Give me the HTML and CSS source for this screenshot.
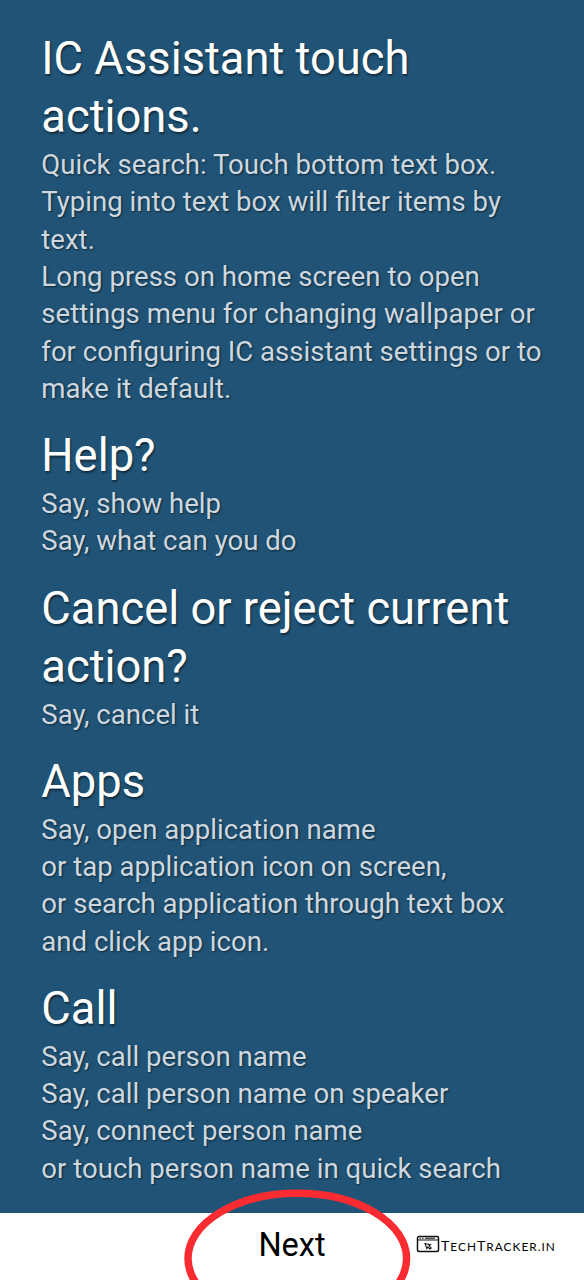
FILE: index.html
```html
<!DOCTYPE html>
<html lang="en">
<head>
<meta charset="utf-8">
<title>IC Assistant help</title>
<link rel="stylesheet" href="styles.css">
</head>
<body>
<main class="help">
  <section class="topic"><h2>IC Assistant touch<br>actions.</h2>
  <p>Quick search: Touch bottom text box.<br>Typing into text box will filter items by<br>text.<br>Long press on home screen to open<br>settings menu for changing wallpaper or<br>for configuring IC assistant settings or to<br>make it default.</p></section>
  <section class="topic"><h2>Help?</h2><p>Say, show help<br>Say, what can you do</p></section>
  <section class="topic"><h2>Cancel or reject current<br>action?</h2><p>Say, cancel it</p></section>
  <section class="topic"><h2>Apps</h2><p>Say, open application name<br>or tap application icon on screen,<br>or search application through text box<br>and click app icon.</p></section>
  <section class="topic"><h2>Call</h2><p>Say, call person name<br>Say, call person name on speaker<br>Say, connect person name<br>or touch person name in quick search</p></section>
</main>
<footer class="bar">
  <button class="next">Next</button>
  <svg class="ring" width="240" height="100" viewBox="0 0 240 100"><ellipse cx="119.300" cy="78.500" rx="109.300" ry="65.200" /></svg>
  <div class="brand">
    <svg width="25" height="18" viewBox="0 0 25 18"><rect x="1.500" y="1.500" width="21" height="15" rx="1.500"/><path class="thin" d="M2 5H22M3.500 3.300H5M6 3.300H7.500M9 3.300H19"/><path class="thin" d="M9 8.500l5.500 1.200-1.600 1.200 2.300 2-1.200 1.100-2.200-2-1 1.600z"/></svg>
    <span class="brand-name">T<small>ECH</small>T<small>RACKER.IN</small></span>
  </div>
</footer>
</body>
</html>
```
FILE: styles.css
```css
* { box-sizing: border-box; }
body { margin: 0; width: 584px; height: 1280px; overflow: hidden; display: flex; flex-direction: column; background: #205375; font-family: Roboto, sans-serif; }
.help { height: 1213px; padding: 30px 0 0 41.300px; white-space: nowrap; }
.topic { margin-bottom: 19.850px; }
h2 { margin: 0 0 -0.400px; font-weight: 400; font-size: 45.300px; line-height: 58.200px; color: #fff; text-shadow: 1px 2px 2px #0007; }
p { margin: 0; font-size: 27.580px; line-height: 37.350px; color: #ced8e0; text-shadow: 1px 1px 2px #0008; }
.bar { position: relative; height: 67px; background: #fff; }
.next { display: block; margin: 0 auto; padding: 0; border: 0; background: none; font: 400 32.500px/65px Roboto, sans-serif; color: #000; }
.ring { position: absolute; left: 178px; top: -33px; fill: none; stroke: #fb2c31; stroke-width: 7.500; }
.brand { position: absolute; left: 416px; top: 22px; display: flex; color: #000; }
.brand svg { fill: none; stroke: #111; stroke-width: 1.500; }
.brand svg .thin { stroke-width: 1.100; }
.brand-name { font: 14px/22px Lato, sans-serif; letter-spacing: 1.050px; }
.brand-name small { font-size: 11.800px; }
```
